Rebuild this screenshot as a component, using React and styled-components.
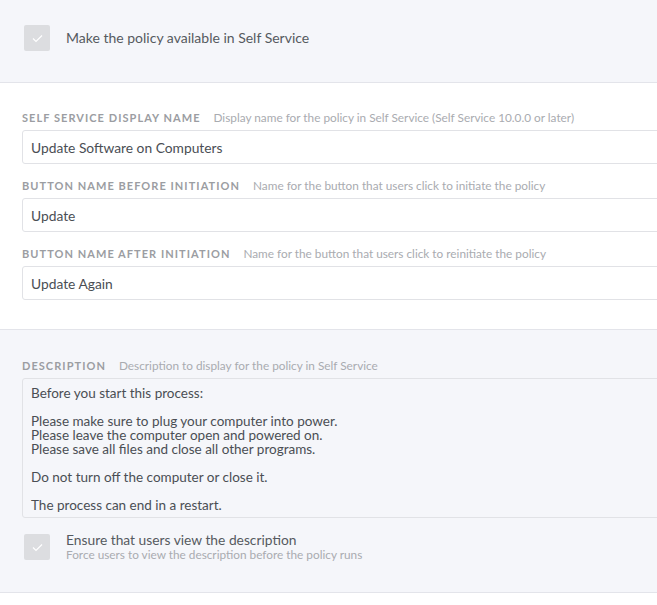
import React from "react";
import styled, { createGlobalStyle } from "styled-components";

const GlobalStyle = createGlobalStyle`
  html, body {
    margin: 0;
    padding: 0;
    background: #ffffff;
    font-family: Lato, "Open Sans", "Liberation Sans", sans-serif;
    overflow: hidden;
  }
`;

const Page = styled.div`
  width: 657px;
  min-height: 605px;
  background: #ffffff;
`;

const Section = styled.section`
  background: ${(p) => (p.$grey ? "#f5f6fa" : "#ffffff")};
  border-bottom: 1px solid #e3e4ea;
  padding: ${(p) => p.$pad || "25px 0 30px 22px"};
`;

const CheckRow = styled.div`
  display: flex;
  align-items: ${(p) => (p.$top ? "flex-start" : "center")};
  gap: 16px;
  padding-left: 2px;
`;

const Box = styled.span`
  width: 26px;
  height: 26px;
  flex: none;
  border-radius: 2px;
  background: #dcdde0;
  display: flex;
  align-items: center;
  justify-content: center;
`;

const CheckText = styled.div`
  display: flex;
  flex-direction: column;
  margin-top: -2px;
`;

const CheckLabel = styled.span`
  font-size: ${(p) => p.$size || "14px"};
  color: #555a60;
  line-height: 16px;
`;

const CheckHint = styled.span`
  font-size: 11.8px;
  color: #a9abb0;
  line-height: 14px;
`;

const Field = styled.div`
  margin-bottom: ${(p) => p.$mb || "21px"};
`;

const LabelRow = styled.div`
  display: flex;
  align-items: baseline;
  gap: 13px;
  height: 13px;
  line-height: 13px;
  margin-bottom: 6px;
  white-space: nowrap;
`;

const Label = styled.span`
  font-size: 11px;
  font-weight: 700;
  letter-spacing: 1.05px;
  text-transform: uppercase;
  color: #9b9da2;
`;

const Hint = styled.span`
  font-size: 11.8px;
  color: #a9abb0;
`;

const Input = styled.div`
  box-sizing: border-box;
  height: 34px;
  margin-right: -4px;
  border: 1px solid #e1e2e6;
  border-radius: 3px 0 0 3px;
  background: #ffffff;
  padding: 0 8px;
  display: flex;
  align-items: center;
  font-size: 13.8px;
  color: #4a4e54;
`;

const TextArea = styled.div`
  box-sizing: border-box;
  height: 140px;
  margin-right: -4px;
  border: 1px solid #e1e2e6;
  border-radius: 3px 0 0 3px;
  background: #f5f6fa;
  padding: 7px 8px;
  font-size: 13.5px;
  line-height: 14px;
  color: #4a4e54;
  white-space: pre-line;
`;

const Check = () => (
  <Box>
    <svg width="11" height="9" viewBox="0 0 11 9">
      <path d="M1 4.5 L4 7.5 L10 1.5" fill="none" stroke="#ffffff" strokeWidth="1.2" />
    </svg>
  </Box>
);

const fields = [
  {
    label: "Self Service Display Name",
    hint: "Display name for the policy in Self Service (Self Service 10.0.0 or later)",
    value: "Update Software on Computers",
  },
  {
    label: "Button Name Before Initiation",
    hint: "Name for the button that users click to initiate the policy",
    value: "Update",
  },
  {
    label: "Button Name After Initiation",
    hint: "Name for the button that users click to reinitiate the policy",
    value: "Update Again",
  },
];

const description = `Before you start this process:

Please make sure to plug your computer into power.
Please leave the computer open and powered on.
Please save all files and close all other programs.

Do not turn off the computer or close it.

The process can end in a restart.`;

export default function App() {
  return (
    <Page>
      <GlobalStyle />
      <Section $grey $pad="25px 0 31px 22px">
        <CheckRow>
          <Check />
          <CheckLabel>Make the policy available in Self Service</CheckLabel>
        </CheckRow>
      </Section>

      <Section $pad="28px 0 29px 22px">
        {fields.map((f, i) => (
          <Field key={f.label} $mb={i === fields.length - 1 ? "0" : "15px"}>
            <LabelRow>
              <Label>{f.label}</Label>
              <Hint>{f.hint}</Hint>
            </LabelRow>
            <Input>{f.value}</Input>
          </Field>
        ))}
      </Section>

      <Section $grey $pad="29px 0 30px 22px">
        <Field $mb="16px">
          <LabelRow>
            <Label>Description</Label>
            <Hint>Description to display for the policy in Self Service</Hint>
          </LabelRow>
          <TextArea>{description}</TextArea>
        </Field>
        <CheckRow $top>
          <Check />
          <CheckText>
            <CheckLabel $size="13.8px">Ensure that users view the description</CheckLabel>
            <CheckHint>Force users to view the description before the policy runs</CheckHint>
          </CheckText>
        </CheckRow>
      </Section>
    </Page>
  );
}
